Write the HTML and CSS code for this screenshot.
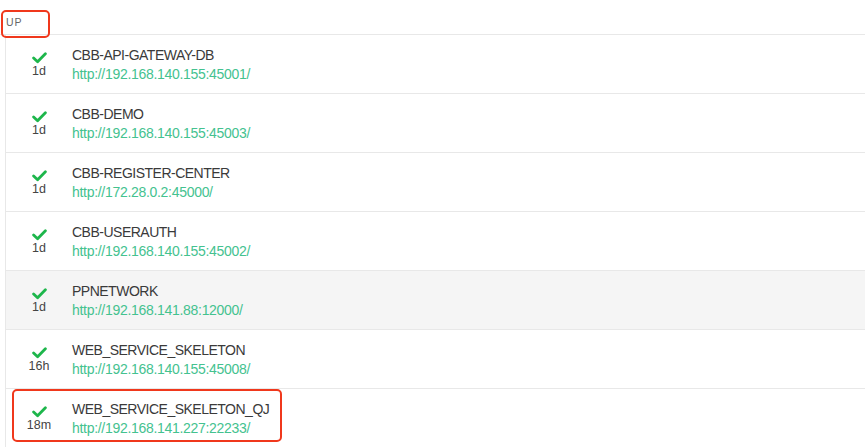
FILE: index.html
```html
<!DOCTYPE html>
<html>
<head>
<meta charset="utf-8">
<link rel="stylesheet" href="styles.css">
</head>
<body>
<div class="panel">
  <div class="header"><span class="label">UP</span></div>
  <div class="list">
    <div class="row">
      <div class="status"><svg class="check" viewBox="0 0 14 11"><path d="M1.5 5.5 L5.2 9 L12.5 1.5" /></svg><span class="age">1d</span></div>
      <div class="info"><div class="name">CBB-API-GATEWAY-DB</div><a class="url">http://192.168.140.155:45001/</a></div>
    </div>
    <div class="row">
      <div class="status"><svg class="check" viewBox="0 0 14 11"><path d="M1.5 5.5 L5.2 9 L12.5 1.5" /></svg><span class="age">1d</span></div>
      <div class="info"><div class="name">CBB-DEMO</div><a class="url">http://192.168.140.155:45003/</a></div>
    </div>
    <div class="row">
      <div class="status"><svg class="check" viewBox="0 0 14 11"><path d="M1.5 5.5 L5.2 9 L12.5 1.5" /></svg><span class="age">1d</span></div>
      <div class="info"><div class="name">CBB-REGISTER-CENTER</div><a class="url">http://172.28.0.2:45000/</a></div>
    </div>
    <div class="row">
      <div class="status"><svg class="check" viewBox="0 0 14 11"><path d="M1.5 5.5 L5.2 9 L12.5 1.5" /></svg><span class="age">1d</span></div>
      <div class="info"><div class="name">CBB-USERAUTH</div><a class="url">http://192.168.140.155:45002/</a></div>
    </div>
    <div class="row hover">
      <div class="status"><svg class="check" viewBox="0 0 14 11"><path d="M1.5 5.5 L5.2 9 L12.5 1.5" /></svg><span class="age">1d</span></div>
      <div class="info"><div class="name">PPNETWORK</div><a class="url">http://192.168.141.88:12000/</a></div>
    </div>
    <div class="row">
      <div class="status"><svg class="check" viewBox="0 0 14 11"><path d="M1.5 5.5 L5.2 9 L12.5 1.5" /></svg><span class="age">16h</span></div>
      <div class="info"><div class="name">WEB_SERVICE_SKELETON</div><a class="url">http://192.168.140.155:45008/</a></div>
    </div>
    <div class="row">
      <div class="status"><svg class="check" viewBox="0 0 14 11"><path d="M1.5 5.5 L5.2 9 L12.5 1.5" /></svg><span class="age">18m</span></div>
      <div class="info"><div class="name">WEB_SERVICE_SKELETON_QJ</div><a class="url">http://192.168.141.227:22233/</a></div>
    </div>
  </div>
  <div class="mark mark-up"></div>
  <div class="mark mark-row"></div>
</div>
</body>
</html>
```
FILE: styles.css
```css
html, body {
  margin: 0;
  padding: 0;
  background: #fff;
}
body {
  font-family: "Liberation Sans", Arial, sans-serif;
  color: #333;
  overflow: hidden;
}
.panel {
  position: relative;
  width: 865px;
  height: 447px;
}
.header {
  height: 34px;
  border-bottom: 1px solid #e8e8e8;
  display: flex;
  align-items: flex-start;
  padding-left: 6px;
  box-sizing: content-box;
}
.label {
  font-size: 10.5px;
  letter-spacing: 1px;
  color: #666;
  line-height: 12px;
  margin-top: 16px;
}
.list {
  margin-left: 5px;
  border-left: 1px solid #e8e8e8;
}
.row {
  height: 58px;
  border-bottom: 1px solid #e8e8e8;
  display: flex;
  align-items: center;
}
.row.hover {
  background: #f5f5f5;
}
.status {
  width: 66px;
  display: flex;
  flex-direction: column;
  align-items: center;
  padding-top: 3px;
}
.check {
  width: 15px;
  height: 12px;
  fill: none;
  stroke: #1db64b;
  stroke-width: 2.6;
  stroke-linecap: round;
  stroke-linejoin: round;
}
.age {
  font-size: 12.5px;
  color: #444;
  line-height: 15px;
  margin-top: 0;
}
.info {
  display: flex;
  flex-direction: column;
  padding-top: 1px;
}
.name {
  font-size: 14px;
  line-height: 19px;
  color: #3a3a3a;
  letter-spacing: -0.5px;
}
.url {
  font-size: 14px;
  line-height: 19px;
  color: #44c28f;
  text-decoration: none;
  letter-spacing: -0.3px;
}
.mark {
  position: absolute;
  border: 2px solid #f0381c;
  border-radius: 5px;
  box-sizing: border-box;
}
.mark-up {
  left: 1px;
  top: 10px;
  width: 49px;
  height: 28px;
}
.mark-row {
  left: 12px;
  top: 389px;
  width: 270px;
  height: 53px;
}
```
